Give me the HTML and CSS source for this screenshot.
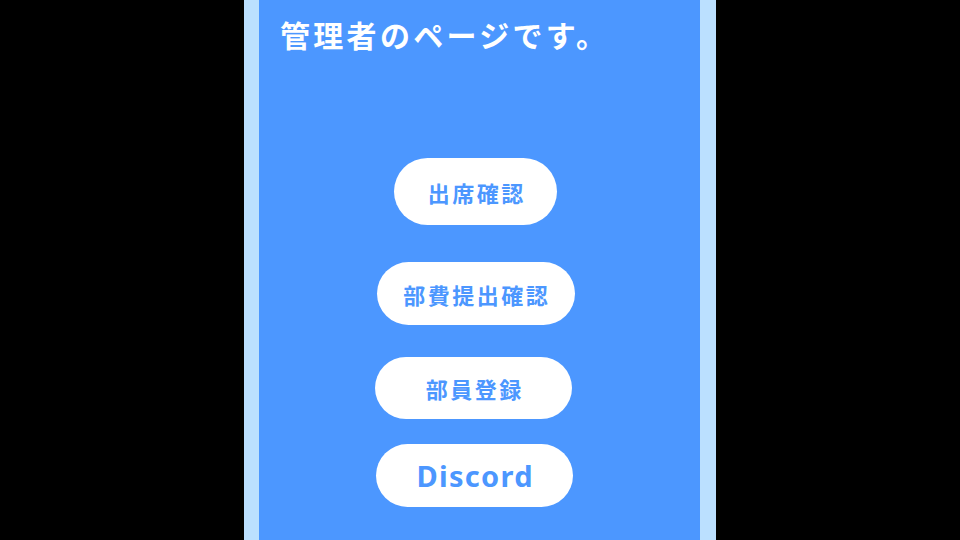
FILE: index.html
```html
<!DOCTYPE html>
<html lang="ja">
<head>
<meta charset="utf-8">
<title>管理者ページ</title>
<link rel="stylesheet" href="styles.css">
</head>
<body>
<div class="column">
  <main class="panel">
    <h1 class="title">管理者のページです。</h1>
    <nav class="menu">
      <a class="btn btn-first" href="#">出席確認</a>
      <a class="btn btn-second" href="#">部費提出確認</a>
      <a class="btn btn-third" href="#">部員登録</a>
      <a class="btn btn-fourth btn-latin" href="#">Discord</a>
    </nav>
  </main>
</div>
</body>
</html>
```

FILE: styles.css
```css
html, body {
  margin: 0;
  padding: 0;
  height: 100%;
}

body {
  background: #000;
  display: flex;
  justify-content: center;
  font-family: "Noto Sans CJK JP", "Noto Sans", sans-serif;
}

.column {
  width: 441px;
  height: 540px;
  border-left: 15px solid #bbe0ff;
  border-right: 16px solid #bbe0ff;
  background: #4c97ff;
  overflow: hidden;
}

.panel {
  padding-top: 19px;
  padding-left: 21px;
}

.title {
  margin: 0;
  color: #fff;
  font-size: 30px;
  line-height: 30px;
  font-weight: 700;
  letter-spacing: 3.3px;
  white-space: nowrap;
}

.menu {
  display: flex;
  flex-direction: column;
  align-items: center;
  margin-top: 109px;
  padding-right: 29px;
}

.btn {
  display: flex;
  align-items: center;
  justify-content: center;
  box-sizing: border-box;
  width: 197px;
  height: 63px;
  border-radius: 32px;
  background: #fff;
  color: #4c97ff;
  text-decoration: none;
  font-size: 22px;
  font-weight: 700;
  letter-spacing: 2.5px;
  padding-left: 2.5px;
}

.btn-first {
  width: 163px;
  height: 67px;
  border-radius: 34px;
}

.btn-second {
  margin-top: 37px;
  width: 198px;
}

.btn-third {
  margin-top: 32px;
  height: 62px;
  margin-right: 4px;
}

.btn-fourth {
  margin-top: 25px;
  margin-right: 2px;
}

.btn-latin {
  font-family: "Noto Sans", sans-serif;
  font-size: 29px;
  letter-spacing: 1.3px;
  padding-left: 1.3px;
}
```
